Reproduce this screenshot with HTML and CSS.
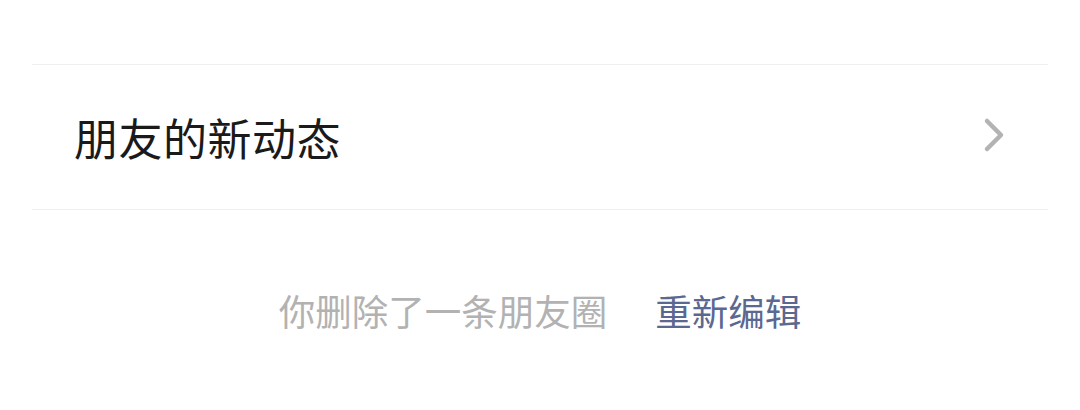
FILE: index.html
```html
<!DOCTYPE html>
<html lang="zh-CN">
<head>
<meta charset="utf-8">
<link rel="stylesheet" href="styles.css">
</head>
<body>
<div class="page">
  <div class="list">
    <div class="row">
      <span class="title">朋友的新动态</span>
      <svg class="chev" width="24" height="36" viewBox="0 0 24 36"><path d="M5 4 L19 18 L5 32" fill="none" stroke="#b3b3b3" stroke-width="4.5" stroke-linecap="round" stroke-linejoin="round"/></svg>
    </div>
  </div>
  <div class="notice">
    <span class="gray">你删除了一条朋友圈</span><span class="link">重新编辑</span>
  </div>
</div>
</body>
</html>
```
FILE: styles.css
```css
html, body { margin: 0; padding: 0; background: #fff; }
body { width: 1080px; height: 410px; overflow: hidden; font-family: "Noto Sans CJK SC", "Noto Sans", sans-serif; }
.page { padding-top: 64px; }
.list { margin: 0 32px; border-top: 1.5px solid #efefef; border-bottom: 1.5px solid #efefef; }
.row { height: 144px; display: flex; align-items: center; justify-content: space-between; padding: 0 42px 0 42px; }
.title { font-size: 44px; color: #1a1a1a; letter-spacing: 0.5px; }
.chev { display: block; margin-top: -4px; }
.notice { display: flex; justify-content: center; align-items: center; height: 200px; font-size: 36.5px; }
.gray { color: #b2b2b2; }
.link { color: #5b6890; margin-left: 48px; }
```
